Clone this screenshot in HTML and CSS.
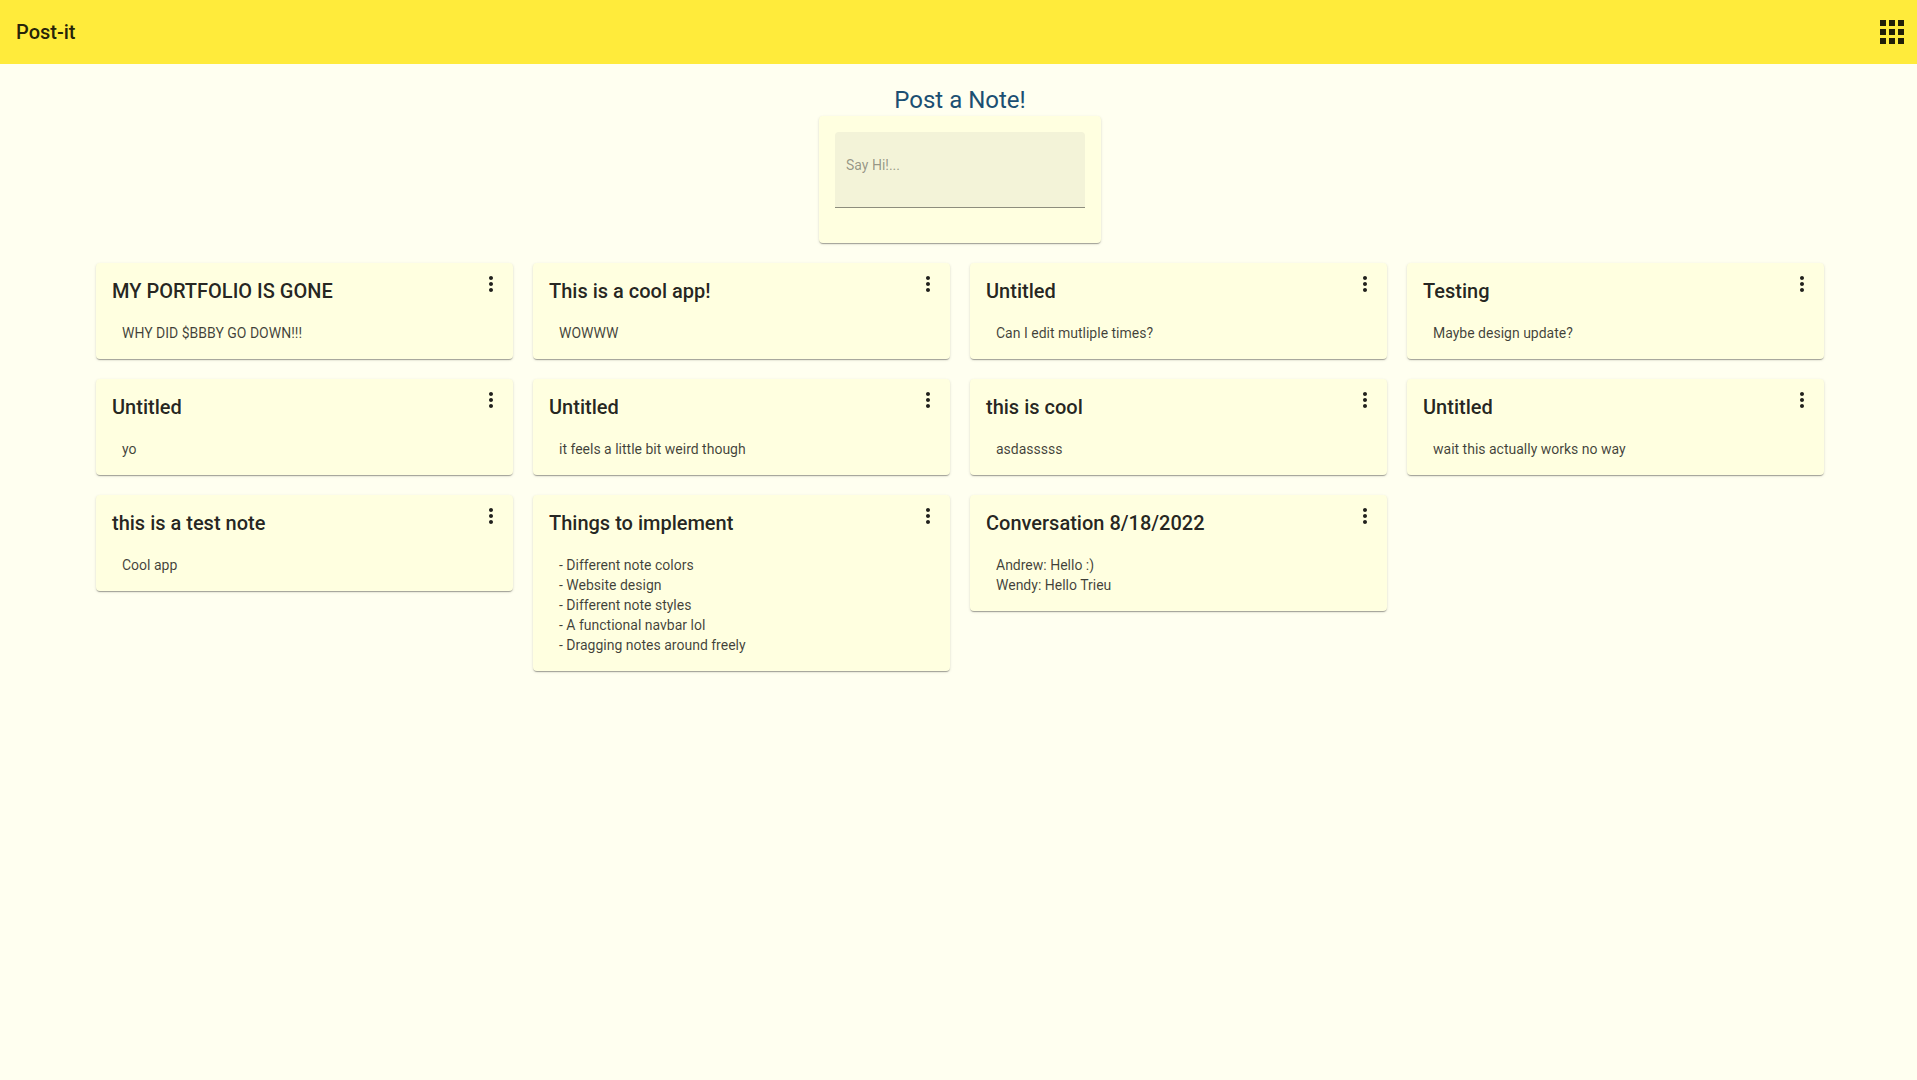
FILE: index.html
```html
<!DOCTYPE html>
<html lang="en">
<head>
    <meta charset="UTF-8">
    <meta name="viewport" content="width=device-width, initial-scale=1.0">
    <title>Post-it</title>
    <link rel="stylesheet" href="styles.css">
</head>
<body>
    <header class="navbar">
        <span class="brand">Post-it</span>
        <svg class="apps-icon" viewBox="0 0 24 24"><path d="M4 8h4V4H4v4zm6 12h4v-4h-4v4zm-6 0h4v-4H4v4zm0-6h4v-4H4v4zm6 0h4v-4h-4v4zm6-10v4h4V4h-4zm-6 4h4V4h-4v4zm6 6h4v-4h-4v4zm0 6h4v-4h-4v4z"/></svg>
    </header>

    <main class="page">
        <h1 class="page-title">Post a Note!</h1>
        <form class="note-form">
            <div class="note-input">Say Hi!...</div>
        </form>

        <div class="notes">
            <article class="note">
                <div class="note-head"><h2>MY PORTFOLIO IS GONE</h2><svg class="more-icon" viewBox="0 0 24 24"><path d="M12 8c1.1 0 2-.9 2-2s-.9-2-2-2-2 .9-2 2 .9 2 2 2zm0 2c-1.1 0-2 .9-2 2s.9 2 2 2 2-.9 2-2-.9-2-2-2zm0 6c-1.1 0-2 .9-2 2s.9 2 2 2 2-.9 2-2-.9-2-2-2z"/></svg></div>
                <p>WHY DID $BBBY GO DOWN!!!</p>
            </article>
            <article class="note">
                <div class="note-head"><h2>This is a cool app!</h2><svg class="more-icon" viewBox="0 0 24 24"><path d="M12 8c1.1 0 2-.9 2-2s-.9-2-2-2-2 .9-2 2 .9 2 2 2zm0 2c-1.1 0-2 .9-2 2s.9 2 2 2 2-.9 2-2-.9-2-2-2zm0 6c-1.1 0-2 .9-2 2s.9 2 2 2 2-.9 2-2-.9-2-2-2z"/></svg></div>
                <p>WOWWW</p>
            </article>
            <article class="note">
                <div class="note-head"><h2>Untitled</h2><svg class="more-icon" viewBox="0 0 24 24"><path d="M12 8c1.1 0 2-.9 2-2s-.9-2-2-2-2 .9-2 2 .9 2 2 2zm0 2c-1.1 0-2 .9-2 2s.9 2 2 2 2-.9 2-2-.9-2-2-2zm0 6c-1.1 0-2 .9-2 2s.9 2 2 2 2-.9 2-2-.9-2-2-2z"/></svg></div>
                <p>Can I edit mutliple times?</p>
            </article>
            <article class="note">
                <div class="note-head"><h2>Testing</h2><svg class="more-icon" viewBox="0 0 24 24"><path d="M12 8c1.1 0 2-.9 2-2s-.9-2-2-2-2 .9-2 2 .9 2 2 2zm0 2c-1.1 0-2 .9-2 2s.9 2 2 2 2-.9 2-2-.9-2-2-2zm0 6c-1.1 0-2 .9-2 2s.9 2 2 2 2-.9 2-2-.9-2-2-2z"/></svg></div>
                <p>Maybe design update?</p>
            </article>
            <article class="note">
                <div class="note-head"><h2>Untitled</h2><svg class="more-icon" viewBox="0 0 24 24"><path d="M12 8c1.1 0 2-.9 2-2s-.9-2-2-2-2 .9-2 2 .9 2 2 2zm0 2c-1.1 0-2 .9-2 2s.9 2 2 2 2-.9 2-2-.9-2-2-2zm0 6c-1.1 0-2 .9-2 2s.9 2 2 2 2-.9 2-2-.9-2-2-2z"/></svg></div>
                <p>yo</p>
            </article>
            <article class="note">
                <div class="note-head"><h2>Untitled</h2><svg class="more-icon" viewBox="0 0 24 24"><path d="M12 8c1.1 0 2-.9 2-2s-.9-2-2-2-2 .9-2 2 .9 2 2 2zm0 2c-1.1 0-2 .9-2 2s.9 2 2 2 2-.9 2-2-.9-2-2-2zm0 6c-1.1 0-2 .9-2 2s.9 2 2 2 2-.9 2-2-.9-2-2-2z"/></svg></div>
                <p>it feels a little bit weird though</p>
            </article>
            <article class="note">
                <div class="note-head"><h2>this is cool</h2><svg class="more-icon" viewBox="0 0 24 24"><path d="M12 8c1.1 0 2-.9 2-2s-.9-2-2-2-2 .9-2 2 .9 2 2 2zm0 2c-1.1 0-2 .9-2 2s.9 2 2 2 2-.9 2-2-.9-2-2-2zm0 6c-1.1 0-2 .9-2 2s.9 2 2 2 2-.9 2-2-.9-2-2-2z"/></svg></div>
                <p>asdasssss</p>
            </article>
            <article class="note">
                <div class="note-head"><h2>Untitled</h2><svg class="more-icon" viewBox="0 0 24 24"><path d="M12 8c1.1 0 2-.9 2-2s-.9-2-2-2-2 .9-2 2 .9 2 2 2zm0 2c-1.1 0-2 .9-2 2s.9 2 2 2 2-.9 2-2-.9-2-2-2zm0 6c-1.1 0-2 .9-2 2s.9 2 2 2 2-.9 2-2-.9-2-2-2z"/></svg></div>
                <p>wait this actually works no way</p>
            </article>
            <article class="note">
                <div class="note-head"><h2>this is a test note</h2><svg class="more-icon" viewBox="0 0 24 24"><path d="M12 8c1.1 0 2-.9 2-2s-.9-2-2-2-2 .9-2 2 .9 2 2 2zm0 2c-1.1 0-2 .9-2 2s.9 2 2 2 2-.9 2-2-.9-2-2-2zm0 6c-1.1 0-2 .9-2 2s.9 2 2 2 2-.9 2-2-.9-2-2-2z"/></svg></div>
                <p>Cool app</p>
            </article>
            <article class="note">
                <div class="note-head"><h2>Things to implement</h2><svg class="more-icon" viewBox="0 0 24 24"><path d="M12 8c1.1 0 2-.9 2-2s-.9-2-2-2-2 .9-2 2 .9 2 2 2zm0 2c-1.1 0-2 .9-2 2s.9 2 2 2 2-.9 2-2-.9-2-2-2zm0 6c-1.1 0-2 .9-2 2s.9 2 2 2 2-.9 2-2-.9-2-2-2z"/></svg></div>
                <p>- Different note colors<br>- Website design<br>- Different note styles<br>- A functional navbar lol<br>- Dragging notes around freely</p>
            </article>
            <article class="note">
                <div class="note-head"><h2>Conversation 8/18/2022</h2><svg class="more-icon" viewBox="0 0 24 24"><path d="M12 8c1.1 0 2-.9 2-2s-.9-2-2-2-2 .9-2 2 .9 2 2 2zm0 2c-1.1 0-2 .9-2 2s.9 2 2 2 2-.9 2-2-.9-2-2-2zm0 6c-1.1 0-2 .9-2 2s.9 2 2 2 2-.9 2-2-.9-2-2-2z"/></svg></div>
                <p>Andrew: Hello :)<br>Wendy: Hello Trieu</p>
            </article>
        </div>
    </main>
</body>
</html>
```

FILE: styles.css
```css
* {
    box-sizing: border-box;
}

body {
    font-family: Roboto, Arial, sans-serif;
    margin: 0;
    min-height: 1080px;
    background-color: #fffff0;
    color: rgba(0, 0, 0, 0.87);
}

.navbar {
    display: flex;
    align-items: center;
    justify-content: space-between;
    height: 64px;
    padding: 0 7px 0 16px;
    background-color: #ffeb3b;
}

.brand {
    font-size: 20px;
    font-weight: 500;
}

.apps-icon {
    width: 36px;
    height: 36px;
    fill: rgba(0, 0, 0, 0.87);
}

.page {
    padding: 20px 93px 0 96px;
}

.page-title {
    margin: 0;
    font-size: 24px;
    font-weight: 400;
    line-height: 32px;
    text-align: center;
    color: #1b4f72;
}

.note-form {
    width: 282px;
    height: 127px;
    margin: 0 auto 20px;
    padding: 16px;
    border-radius: 4px;
    background-color: #ffffe0;
    box-shadow: 0 2px 1px -1px rgba(0, 0, 0, 0.2), 0 1px 1px 0 rgba(0, 0, 0, 0.14), 0 1px 3px 0 rgba(0, 0, 0, 0.12);
}

.note-input {
    height: 76px;
    padding: 23px 11px 0;
    font-size: 14px;
    line-height: 20px;
    color: rgba(0, 0, 0, 0.4);
    background-color: #f3f3d8;
    border-bottom: 1px solid rgba(0, 0, 0, 0.42);
    border-radius: 4px 4px 0 0;
}

.notes {
    display: grid;
    grid-template-columns: repeat(4, 1fr);
    gap: 20px;
    align-items: start;
}

.note {
    padding: 16px;
    border-radius: 4px;
    background-color: #ffffe0;
    box-shadow: 0 2px 1px -1px rgba(0, 0, 0, 0.2), 0 1px 1px 0 rgba(0, 0, 0, 0.14), 0 1px 3px 0 rgba(0, 0, 0, 0.12);
}

.note-head {
    display: flex;
    align-items: flex-start;
    justify-content: space-between;
    height: 24px;
}

.note h2 {
    margin: 0;
    font-size: 20px;
    font-weight: 500;
    line-height: 24px;
}

.more-icon {
    flex-shrink: 0;
    width: 24px;
    height: 24px;
    margin: -7px -6px 0 0;
    fill: rgba(0, 0, 0, 0.87);
}

.note p {
    margin: 20px 0 0;
    padding-left: 10px;
    font-size: 14px;
    line-height: 20px;
    color: rgba(0, 0, 0, 0.75);
}
```
